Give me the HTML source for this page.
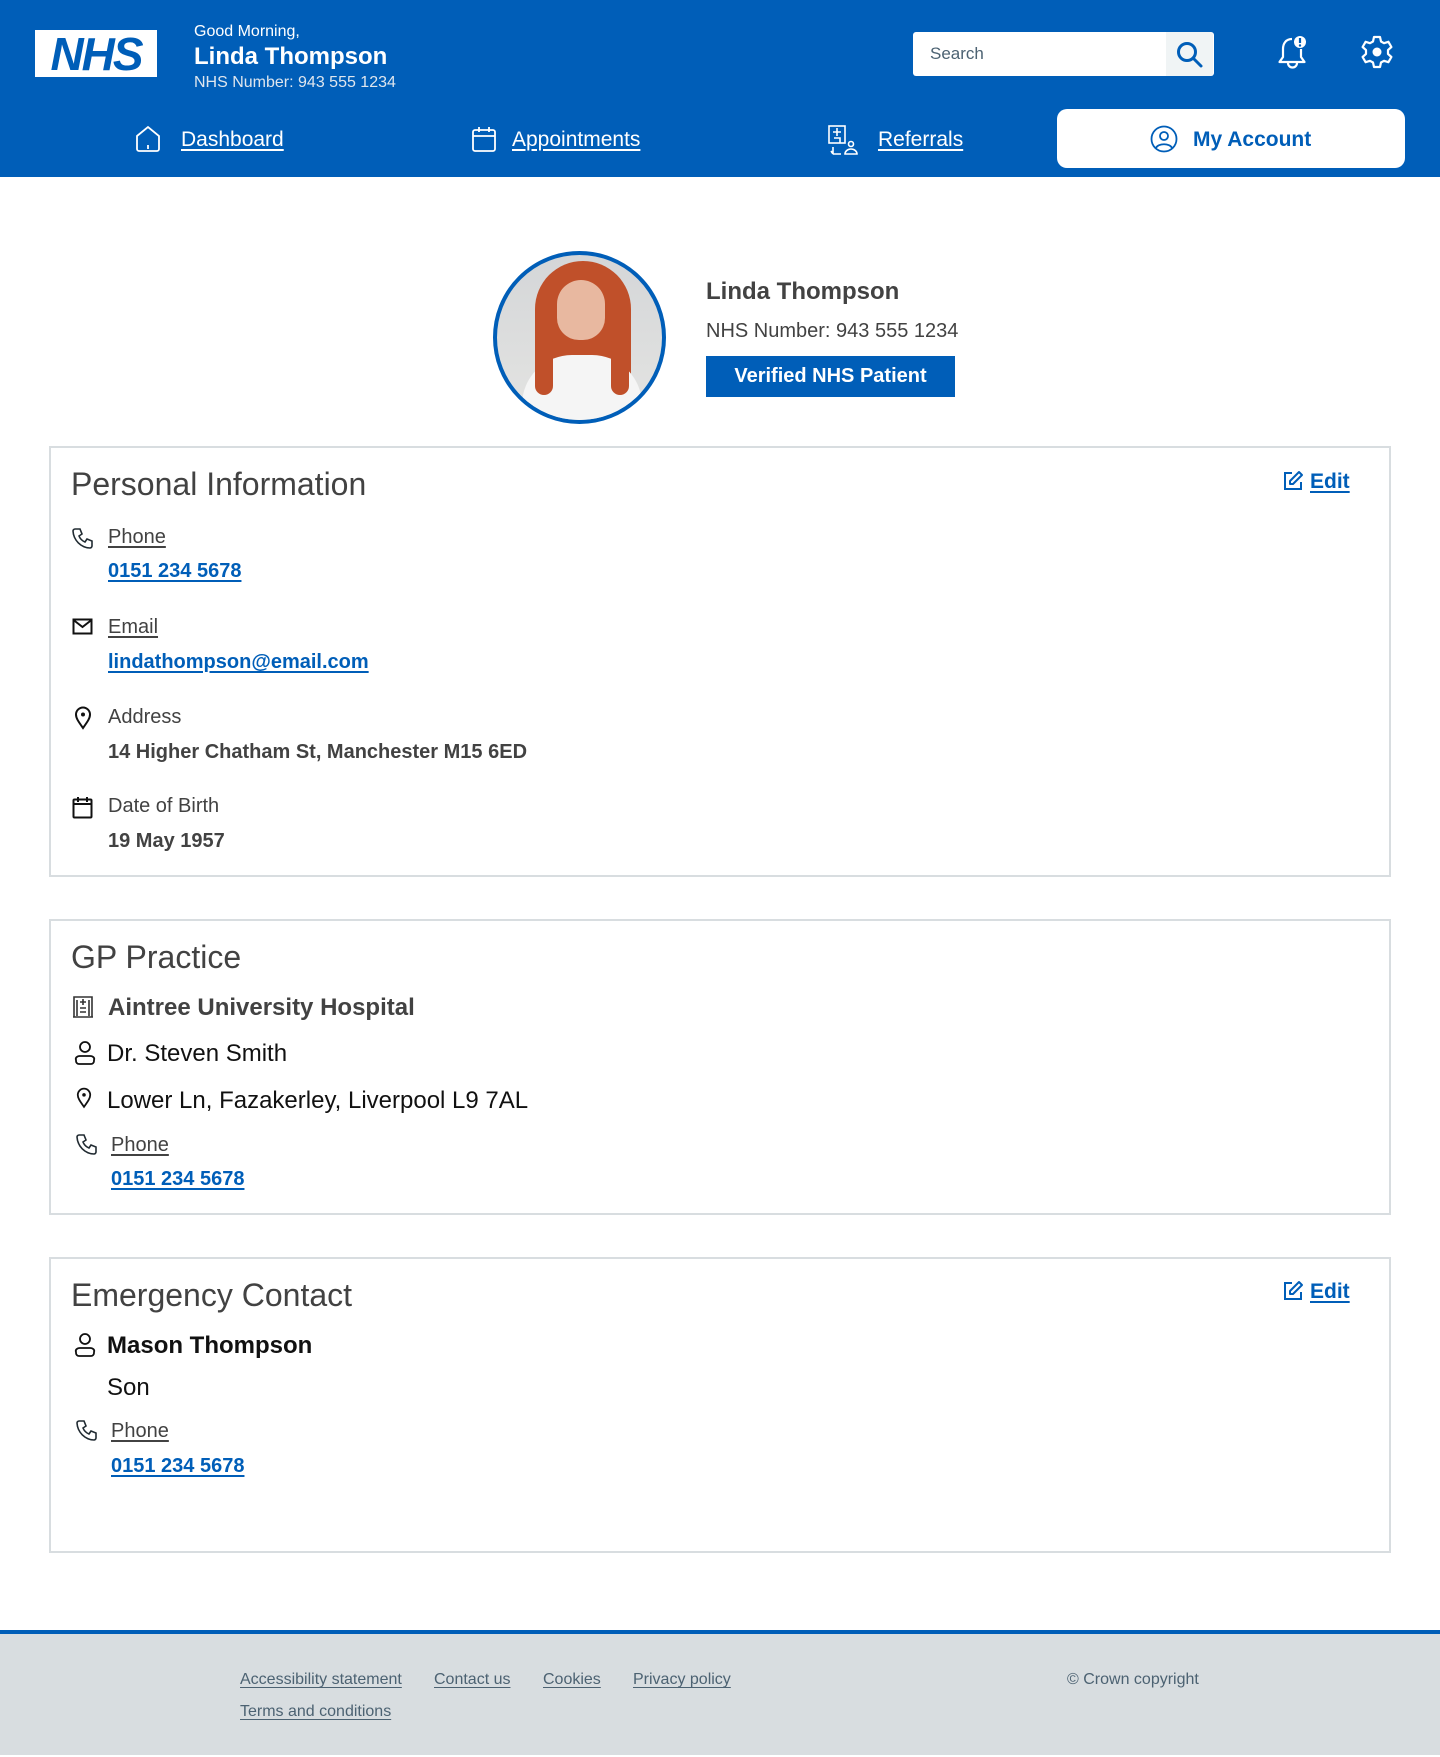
<!DOCTYPE html>
<html><head><meta charset="utf-8"><style>
*{margin:0;padding:0;box-sizing:border-box}
body{width:1440px;height:1755px;position:relative;background:#fff;font-family:"Liberation Sans",Arial,sans-serif;color:#212b32;overflow:hidden}
.a{position:absolute;white-space:nowrap}
.hdr{position:absolute;left:0;top:0;width:1440px;height:177px;background:#005eb8}
.w{color:#fff}
.u{text-decoration:underline;text-underline-offset:3px}
.card{position:absolute;left:49px;width:1342px;border:2px solid #d8dde0;background:#fff}
.lnk{color:#005eb8;font-weight:bold;text-decoration:underline;text-underline-offset:3px}
svg{position:absolute}
.c{position:absolute;left:0;top:2px;width:1440px;height:1755px}
</style></head><body>
<div class="hdr"></div>
<!-- NHS logo -->
<div class="a" style="left:35px;top:30px;width:122px;height:47px;background:#fff;overflow:hidden">
<div style="position:absolute;left:0;top:0;width:122px;height:47px;color:#005eb8;font:italic bold 46px/48px 'Liberation Sans';text-align:center;letter-spacing:-2px">NHS</div></div>
<div class="a w" style="left:194px;top:23px;font-size:16px;line-height:18px">Good Morning,</div>
<div class="a w" style="left:194px;top:44px;font-size:24px;line-height:26px;font-weight:bold">Linda Thompson</div>
<div class="a w" style="left:194px;top:74px;font-size:16px;line-height:18px;color:#dfe6ee">NHS Number: 943 555 1234</div>
<!-- search -->
<div class="a" style="left:913px;top:32px;width:301px;height:44px;background:#fff;border-radius:3px"></div>
<div class="a" style="left:930px;top:44px;font-size:17px;color:#4c6272">Search</div>
<div class="a" style="left:1166px;top:32px;width:47px;height:44px;background:#f0f4f5;border-radius:0 3px 3px 0"></div>
<svg style="left:1175px;top:40px" width="30" height="30" viewBox="0 0 30 30"><circle cx="12" cy="12" r="8.5" fill="none" stroke="#005eb8" stroke-width="3"/><path d="M18 18l8 8" stroke="#005eb8" stroke-width="3" stroke-linecap="round"/></svg>
<!-- bell -->
<svg style="left:1277px;top:34px" width="32" height="38" viewBox="0 0 32 38"><path d="M15 5c-6 0-9 4.5-9 10v8l-3.5 5h25L24 23v-8" fill="none" stroke="#fff" stroke-width="2.2" stroke-linejoin="round"/><path d="M11 29a4.5 4.5 0 0 0 9 0" fill="none" stroke="#fff" stroke-width="2.2"/><circle cx="23" cy="8" r="6" fill="#fff"/><path d="M23 4v5" stroke="#005eb8" stroke-width="2.2"/><circle cx="23" cy="11.5" r="1.2" fill="#005eb8"/></svg>
<!-- gear -->
<svg style="left:1360px;top:34px" width="34" height="36" viewBox="0 0 34 36"><path d="M14 3h6l1 4.5 3 1.7 4.4-1.4 3 5.2-3.4 3.1v3.8l3.4 3.1-3 5.2-4.4-1.4-3 1.7-1 4.5h-6l-1-4.5-3-1.7-4.4 1.4-3-5.2 3.4-3.1v-3.8L2.6 13l3-5.2L10 9.2l3-1.7z" fill="none" stroke="#fff" stroke-width="2.2" stroke-linejoin="round"/><circle cx="17" cy="18" r="4.5" fill="#fff"/></svg>
<!-- nav -->
<svg style="left:134px;top:125px" width="28" height="28" viewBox="0 0 28 28"><path d="M3 11L14 2l11 9v13a2 2 0 0 1-2 2H5a2 2 0 0 1-2-2z" fill="none" stroke="#fff" stroke-width="1.8"/><path d="M14 20v4" stroke="#fff" stroke-width="1.8"/></svg>
<div class="a w u" style="left:181px;top:128px;font-size:21px">Dashboard</div>
<svg style="left:472px;top:126px" width="24" height="26" viewBox="0 0 24 26"><rect x="1" y="4" width="22" height="21" rx="2" fill="none" stroke="#fff" stroke-width="1.8"/><path d="M1 10h22M7 1v5M17 1v5" stroke="#fff" stroke-width="1.8"/></svg>
<div class="a w u" style="left:512px;top:128px;font-size:21px">Appointments</div>
<svg style="left:827px;top:123px" width="32" height="32" viewBox="0 0 32 32"><rect x="2" y="3" width="16" height="17" fill="none" stroke="#fff" stroke-width="1.6"/><path d="M10 5v8M6 9h8M7 15h6v5" fill="none" stroke="#fff" stroke-width="1.6"/><circle cx="24" cy="21" r="2.5" fill="none" stroke="#fff" stroke-width="1.6"/><path d="M18 31a6 5 0 0 1 12 0zM6 31h8M6 31l-2-3M6 31V24" fill="none" stroke="#fff" stroke-width="1.6"/></svg>
<div class="a w u" style="left:878px;top:128px;font-size:21px">Referrals</div>
<div class="a" style="left:1057px;top:109px;width:348px;height:59px;background:#fff;border-radius:10px"></div>
<svg style="left:1150px;top:125px" width="28" height="28" viewBox="0 0 28 28"><circle cx="14" cy="14" r="12.5" fill="none" stroke="#005eb8" stroke-width="1.8"/><circle cx="14" cy="11" r="4" fill="none" stroke="#005eb8" stroke-width="1.8"/><path d="M6 23c2-5 14-5 16 0" fill="none" stroke="#005eb8" stroke-width="1.8"/></svg>
<div class="a" style="left:1193px;top:128px;font-size:21px;font-weight:bold;color:#005eb8">My Account</div>
<!-- profile -->
<div class="a" style="left:493px;top:251px;width:173px;height:173px;border-radius:50%;border:4px solid #005eb8;overflow:hidden;background:linear-gradient(#d4d6d8,#e4e4e2)">
 <div style="position:absolute;left:38px;top:6px;width:96px;height:150px;border-radius:48px 48px 30px 30px;background:#c0502a"></div>
 <div style="position:absolute;left:60px;top:25px;width:48px;height:60px;border-radius:24px 24px 22px 22px;background:#e8b8a0"></div>
 <div style="position:absolute;left:25px;top:100px;width:120px;height:90px;border-radius:50px 50px 0 0;background:#f5f5f5"></div>
 <div style="position:absolute;left:38px;top:80px;width:18px;height:60px;border-radius:9px;background:#c0502a"></div>
 <div style="position:absolute;left:114px;top:80px;width:18px;height:60px;border-radius:9px;background:#c0502a"></div>
</div>
<div class="c">
<div class="a" style="left:706px;top:276px;font-size:24px;font-weight:bold;color:#424242">Linda Thompson</div>
<div class="a" style="left:706px;top:318px;font-size:20px;color:#424242">NHS Number: 943 555 1234</div>
</div>
<div class="a" style="left:706px;top:356px;width:249px;height:41px;background:#005eb8;color:#fff;font-size:20px;font-weight:bold;text-align:center;line-height:41px">Verified NHS Patient</div>

<!-- card 1 -->
<div class="card" style="top:446px;height:431px"></div>
<div class="c">
<div class="a" style="left:71px;top:464px;font-size:32px;color:#424242">Personal Information</div>
<svg style="left:1282px;top:468px" width="22" height="22" viewBox="0 0 22 22"><path d="M10 3H3v16h16v-7" fill="none" stroke="#005eb8" stroke-width="2"/><path d="M17 2l3 3-9 9H8v-3z" fill="none" stroke="#005eb8" stroke-width="2" stroke-linejoin="round"/></svg>
<div class="a lnk" style="left:1310px;top:468px;font-size:21px">Edit</div>
<svg style="left:72px;top:525px" width="22" height="22" viewBox="0 0 22 22"><path d="M3 2h5l2 5-3 2a11 11 0 0 0 6 6l2-3 5 2v5c0 1-1 2-2 2A18 18 0 0 1 1 4c0-1 1-2 2-2z" fill="none" stroke="#212b32" stroke-width="1.6"/></svg>
<div class="a u" style="left:108px;top:524px;font-size:20px;color:#424242">Phone</div>
<div class="a lnk" style="left:108px;top:558px;font-size:20px">0151 234 5678</div>
<svg style="left:72px;top:616px" width="22" height="18" viewBox="0 0 22 18"><rect x="1.5" y="1.5" width="18" height="14" fill="none" stroke="#111" stroke-width="2"/><path d="M1.5 2l9 7 9-7" fill="none" stroke="#111" stroke-width="2"/></svg>
<div class="a u" style="left:108px;top:614px;font-size:20px;color:#424242">Email</div>
<div class="a lnk" style="left:108px;top:649px;font-size:20px">lindathompson@email.com</div>
<svg style="left:74px;top:704px" width="18" height="24" viewBox="0 0 18 24"><path d="M9 22C4 15 2 12 2 8.5a7 7 0 0 1 14 0C16 12 14 15 9 22z" fill="none" stroke="#111" stroke-width="2"/><circle cx="9" cy="8.5" r="2" fill="#111"/></svg>
<div class="a" style="left:108px;top:704px;font-size:20px;color:#424242">Address</div>
<div class="a" style="left:108px;top:739px;font-size:20px;font-weight:bold;color:#424242">14 Higher Chatham St, Manchester M15 6ED</div>
<svg style="left:72px;top:794px" width="22" height="23" viewBox="0 0 22 23"><rect x="1.5" y="3.5" width="18" height="18" rx="1" fill="none" stroke="#111" stroke-width="2"/><path d="M1.5 8h18M6 1v5M15 1v5" stroke="#111" stroke-width="2"/></svg>
<div class="a" style="left:108px;top:793px;font-size:20px;color:#424242">Date of Birth</div>
<div class="a" style="left:108px;top:828px;font-size:20px;font-weight:bold;color:#424242">19 May 1957</div>
</div>

<!-- card 2 -->
<div class="card" style="top:919px;height:296px"></div>
<div class="c">
<div class="a" style="left:71px;top:937px;font-size:32px;color:#424242">GP Practice</div>
<svg style="left:72px;top:992px" width="22" height="24" viewBox="0 0 22 24"><path d="M2 23V3h18v20M1 23h20M11 5v6M8 8h6M5 6v16M17 6v16M8 14h6M8 18h6" fill="none" stroke="#333" stroke-width="1.6"/></svg>
<div class="a" style="left:108px;top:992px;font-size:24px;font-weight:bold;color:#424242">Aintree University Hospital</div>
<svg style="left:74px;top:1038px" width="22" height="26" viewBox="0 0 22 26"><circle cx="11" cy="7" r="5" fill="none" stroke="#111" stroke-width="1.8"/><path d="M2 20a4 3 0 0 1 4-4h10a4 3 0 0 1 4 4v1a3 3 0 0 1-3 3H5a3 3 0 0 1-3-3z" fill="none" stroke="#111" stroke-width="1.8"/></svg>
<div class="a" style="left:107px;top:1038px;font-size:24px;color:#111">Dr. Steven Smith</div>
<svg style="left:76px;top:1085px" width="16" height="22" viewBox="0 0 18 24"><path d="M9 22C4 15 2 12 2 8.5a7 7 0 0 1 14 0C16 12 14 15 9 22z" fill="none" stroke="#111" stroke-width="2"/><circle cx="9" cy="8.5" r="2" fill="#111"/></svg>
<div class="a" style="left:107px;top:1085px;font-size:24px;color:#111">Lower Ln, Fazakerley, Liverpool L9 7AL</div>
<svg style="left:76px;top:1131px" width="22" height="22" viewBox="0 0 22 22"><path d="M3 2h5l2 5-3 2a11 11 0 0 0 6 6l2-3 5 2v5c0 1-1 2-2 2A18 18 0 0 1 1 4c0-1 1-2 2-2z" fill="none" stroke="#212b32" stroke-width="1.6"/></svg>
<div class="a u" style="left:111px;top:1132px;font-size:20px;color:#424242">Phone</div>
<div class="a lnk" style="left:111px;top:1166px;font-size:20px">0151 234 5678</div>
</div>

<!-- card 3 -->
<div class="card" style="top:1257px;height:296px"></div>
<div class="c">
<div class="a" style="left:71px;top:1275px;font-size:32px;color:#424242">Emergency Contact</div>
<svg style="left:1282px;top:1278px" width="22" height="22" viewBox="0 0 22 22"><path d="M10 3H3v16h16v-7" fill="none" stroke="#005eb8" stroke-width="2"/><path d="M17 2l3 3-9 9H8v-3z" fill="none" stroke="#005eb8" stroke-width="2" stroke-linejoin="round"/></svg>
<div class="a lnk" style="left:1310px;top:1278px;font-size:21px">Edit</div>
<svg style="left:74px;top:1330px" width="22" height="26" viewBox="0 0 22 26"><circle cx="11" cy="7" r="5" fill="none" stroke="#111" stroke-width="1.8"/><path d="M2 20a4 3 0 0 1 4-4h10a4 3 0 0 1 4 4v1a3 3 0 0 1-3 3H5a3 3 0 0 1-3-3z" fill="none" stroke="#111" stroke-width="1.8"/></svg>
<div class="a" style="left:107px;top:1330px;font-size:24px;font-weight:bold;color:#111">Mason Thompson</div>
<div class="a" style="left:107px;top:1372px;font-size:24px;color:#111">Son</div>
<svg style="left:76px;top:1417px" width="22" height="22" viewBox="0 0 22 22"><path d="M3 2h5l2 5-3 2a11 11 0 0 0 6 6l2-3 5 2v5c0 1-1 2-2 2A18 18 0 0 1 1 4c0-1 1-2 2-2z" fill="none" stroke="#212b32" stroke-width="1.6"/></svg>
<div class="a u" style="left:111px;top:1418px;font-size:20px;color:#424242">Phone</div>
<div class="a lnk" style="left:111px;top:1453px;font-size:20px">0151 234 5678</div>
</div>

<!-- footer -->
<div class="a" style="left:0;top:1630px;width:1440px;height:125px;background:#d8dde0;border-top:4px solid #005eb8"></div>
<div class="a u" style="left:240px;top:1671px;font-size:16px;color:#4c6272">Accessibility statement</div>
<div class="a u" style="left:434px;top:1671px;font-size:16px;color:#4c6272">Contact us</div>
<div class="a u" style="left:543px;top:1671px;font-size:16px;color:#4c6272">Cookies</div>
<div class="a u" style="left:633px;top:1671px;font-size:16px;color:#4c6272">Privacy policy</div>
<div class="a u" style="left:240px;top:1703px;font-size:16px;color:#4c6272">Terms and conditions</div>
<div class="a" style="left:1067px;top:1671px;font-size:16px;color:#4c6272">© Crown copyright</div>
</body></html>
